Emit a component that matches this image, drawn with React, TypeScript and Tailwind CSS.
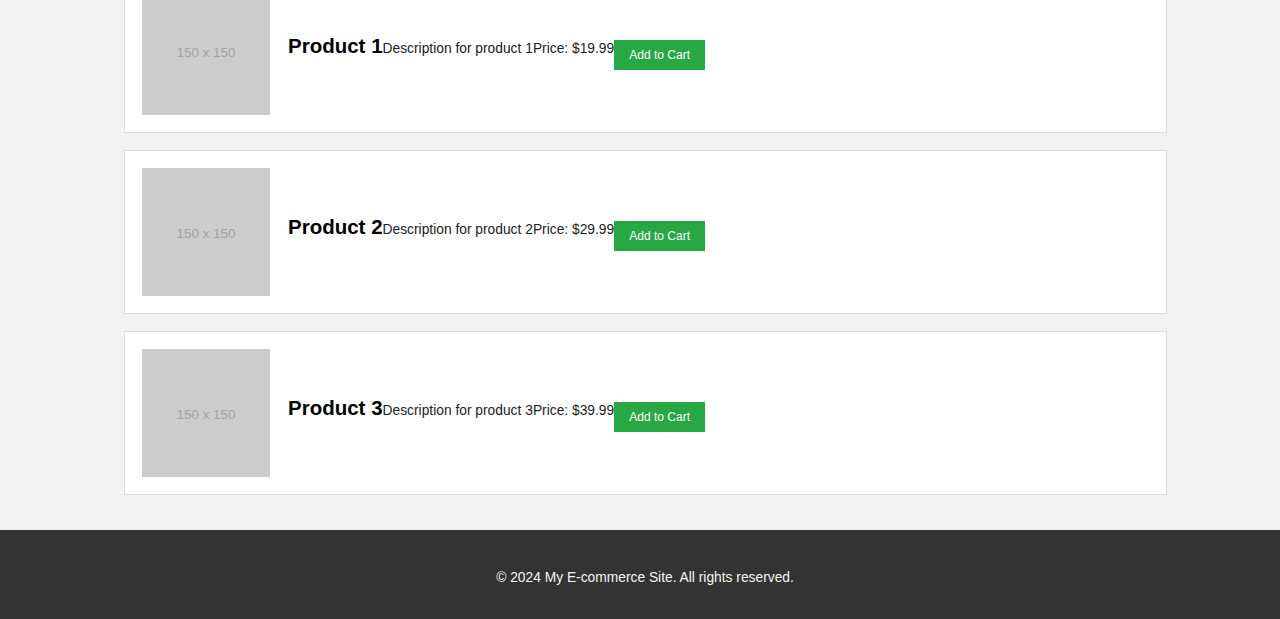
const products = [
  { id: 1, name: "Product 1", price: "$19.99" },
  { id: 2, name: "Product 2", price: "$29.99" },
  { id: 3, name: "Product 3", price: "$39.99" },
];

function ProductCard({ product }: { product: (typeof products)[number] }) {
  return (
    <div className="mb-[17px] flex h-[164px] items-center border border-[#dddddd] bg-white px-[17px]">
      <div className="flex h-[128px] w-[128px] shrink-0 items-center justify-center bg-[#cccccc] pt-[5px] text-[13.4px] text-[#a3a3a3]">
        150 x 150
      </div>
      <div className="ml-[18px] flex items-center">
        <h2 className="mb-[10px] text-[20.5px] leading-[24px] font-bold text-black">{product.name}</h2>
        <p className="mb-[4px] text-[13.8px] leading-[16px] text-[#222222]">
          Description for product {product.id}
        </p>
        <p className="mb-[4px] text-[13.8px] leading-[16px] text-[#222222]">Price: {product.price}</p>
        <button className="mt-[8px] h-[30px] w-[91px] bg-[#28a745] text-[12px] text-white">Add to Cart</button>
      </div>
    </div>
  );
}

export default function App() {
  return (
    <div
      className="h-[619px] overflow-hidden bg-[#f2f2f2]"
      style={{ fontFamily: '"Liberation Sans", Arial, sans-serif' }}
    >
      <main className="-mt-[31px] pr-[113px] pb-[18px] pl-[124px]">
        {products.map((p) => (
          <ProductCard key={p.id} product={p} />
        ))}
      </main>
      <footer className="bg-[#333333] pt-[40px] pb-[33px] pl-[10px] text-center text-[13.8px] leading-[16px] text-[#f5f5f5]">
        © 2024 My E-commerce Site. All rights reserved.
      </footer>
    </div>
  );
}
